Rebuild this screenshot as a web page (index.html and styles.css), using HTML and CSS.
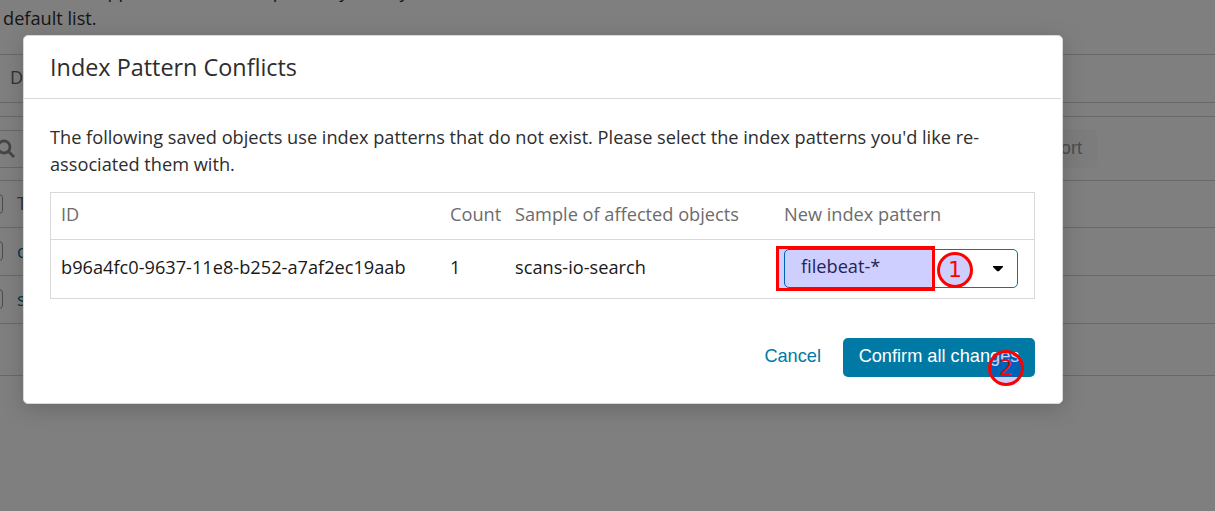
FILE: index.html
```html
<!DOCTYPE html>
<html lang="en">
<head>
<meta charset="utf-8">
<title>Index Pattern Conflicts</title>
<link rel="stylesheet" href="styles.css">
</head>
<body>
<main class="page">
  <p class="intro">associated application, which is probably what you<br>default list.</p>
  <div class="tabs">D</div>
  <div class="toolbar">
    <div class="search"><svg class="search-icon" viewBox="0 0 20 20"><circle cx="8" cy="8" r="6"/><path d="M12.5 12.5L18 18"/></svg></div>
    <div class="export">Export</div>
  </div>
  <div class="item head"><span class="check"></span><span>T</span></div>
  <div class="item"><span class="check"></span><span>d</span></div>
  <div class="item"><span class="check"></span><span>s</span></div>
  <div class="item footer"></div>
</main>
<div class="overlay"></div>
<section class="modal">
  <h1 class="title">Index Pattern Conflicts</h1>
  <div class="body">
    <p class="message">The following saved objects use index patterns that do not exist. Please select the index patterns you'd like re-<br>associated them with.</p>
    <div class="table">
      <div class="row labels"><span>ID</span><span>Count</span><span>Sample of affected objects</span><span>New index pattern</span></div>
      <div class="row values"><span>b96a4fc0-9637-11e8-b252-a7af2ec19aab</span><span>1</span><span>scans-io-search</span>
        <div class="select"><span>filebeat-*</span><svg class="caret" viewBox="0 0 10 6"><path d="M0 0H10V1L5.8 5.3H4.2L0 1Z"/></svg></div>
      </div>
    </div>
    <div class="actions"><span class="cancel">Cancel</span><span class="confirm">Confirm all changes</span></div>
  </div>
</section>
<div class="highlight"></div>
<div class="marker one">1</div>
<div class="marker two">2</div>
</body>
</html>
```
FILE: styles.css
```css
* { box-sizing: border-box; }
body { margin: 0; width: 1215px; height: 511px; overflow: hidden; background: #fff; color: #2d2d2d; font: 18.2px/27px "Open Sans", "Noto Sans", sans-serif; }
.page { height: 511px; overflow: hidden; }
.intro { margin: -22px 0 0 3px; height: 76px; }
.tabs { height: 49px; border: 1px solid #d0d0d0; border-width: 1px 0; padding: 9px 0 0 10px; color: #666; }
.toolbar { height: 64px; margin-top: 13px; border-top: 1px solid #d0d0d0; display: flex; justify-content: space-between; align-items: center; padding-right: 118px; }
.search { width: 400px; height: 38px; border: 1px solid #d0d0d0; border-width: 1px 0; }
.search-icon { width: 20px; height: 20px; display: block; margin: 8px 0 0 -4px; fill: none; stroke: #8c8c8c; stroke-width: 2.8; }
.export { height: 39px; width: 90px; border-radius: 5px; background: #f9f9f9; color: #999; font: 18.2px/38px "Liberation Sans", sans-serif; text-align: right; padding-right: 15px; }
.item { height: 48px; border-top: 1px solid #d0d0d0; display: flex; align-items: center; gap: 14px; padding-bottom: 1px; color: #0079a5; }
.head { height: 47px; color: #666; }
.check { width: 20px; height: 20px; margin-left: -17px; border: 1px solid #999; border-radius: 4px; }
.footer { height: 53px; border-bottom: 1px solid #d0d0d0; }
.overlay { position: absolute; inset: 0; background: rgba(0,0,0,.5); }
.modal { position: absolute; left: 23px; top: 35px; width: 1040px; height: 369px; background: #fff; border: 1px solid #d9d9d9; border-radius: 5px; box-shadow: 0 5px 22px rgba(0,0,0,.18); }
.title { margin: 0 1px 0 0; height: 63px; padding: 16px 26px 0; border-bottom: 1px solid #d9d9d9; font-size: 23.4px; line-height: 30px; font-weight: 400; }
.body { padding: 25px 27px 0 26px; }
.message { margin: 0; white-space: nowrap; }
.table { margin-top: 14px; height: 107px; border: 1px solid #d9d9d9; }
.row { display: grid; grid-template-columns: 389px 65px 269px 1fr; align-items: center; padding-left: 10px; }
.labels { height: 47px; padding-bottom: 3px; border-bottom: 1px solid #d9d9d9; color: #6c6c6c; }
.values { height: 58px; padding-bottom: 3px; color: #191919; }
.select { width: 234px; height: 39px; margin-top: 1px; display: flex; align-items: center; justify-content: space-between; border: 1px solid #0079a5; border-radius: 5px; padding: 0 14px 4px 16px; color: #2d2d2d; }
.caret { width: 10px; height: 6px; margin-top: 5px; fill: #000; }
.actions { margin-top: 39px; display: flex; justify-content: flex-end; gap: 22px; font: 18.2px/36px "Liberation Sans", sans-serif; }
.cancel { color: #0079a5; }
.confirm { height: 39px; width: 192px; background: #0079a5; color: #fff; border-radius: 5px; text-align: center; }
.highlight { position: absolute; left: 776px; top: 246px; width: 159px; height: 45px; border: 3px solid #f00; background: rgba(0,0,255,.19); }
.marker { position: absolute; width: 36px; height: 36px; border: 3px solid #f00; border-radius: 50%; background: rgba(0,0,255,.19); color: #f00; font: 22px/30px "DejaVu Sans", sans-serif; text-align: center; }
.one { left: 937px; top: 252px; }
.two { left: 988px; top: 350px; }
```
